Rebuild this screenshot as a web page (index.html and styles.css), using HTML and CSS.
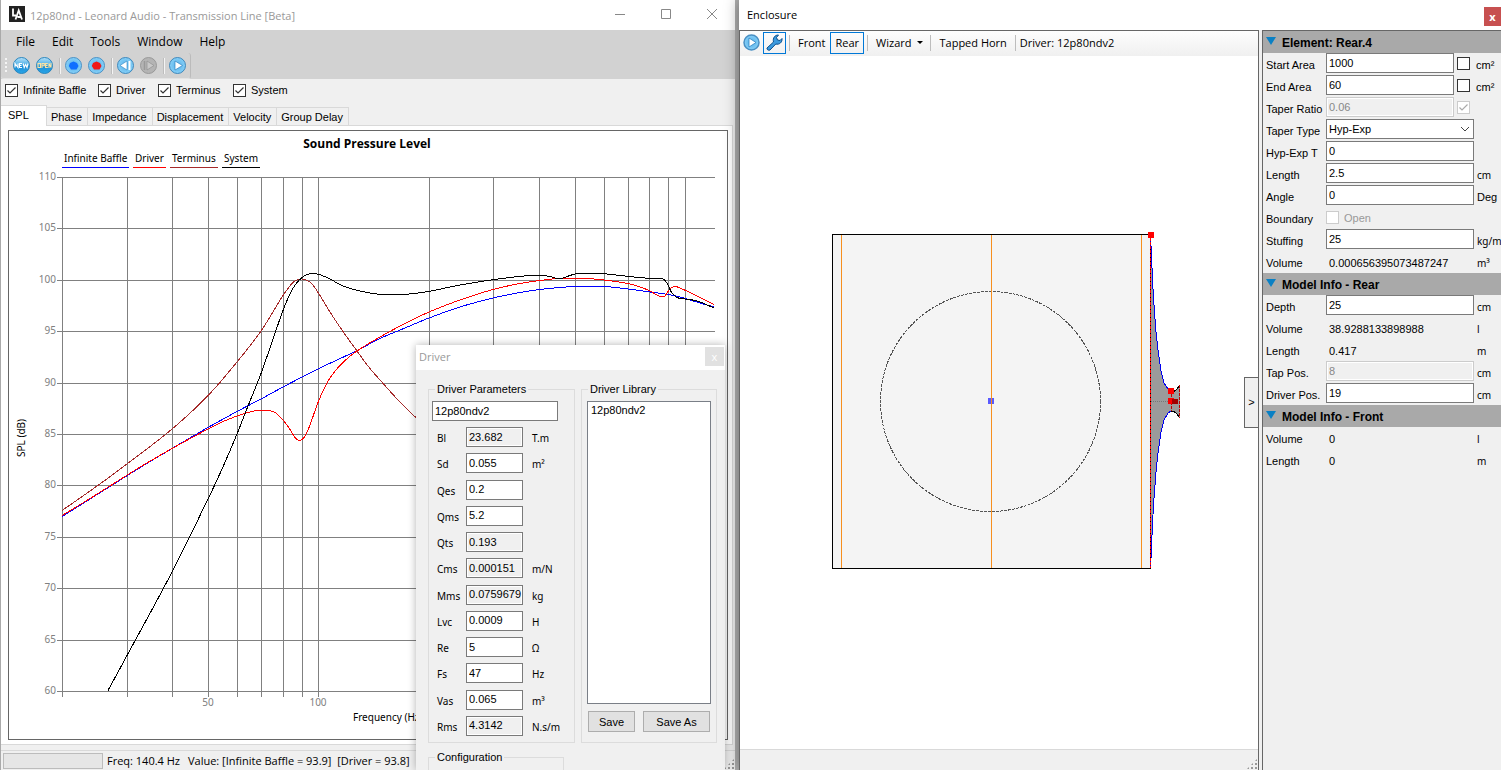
FILE: index.html
```html
<!DOCTYPE html>
<html lang="en">
<head>
    <meta charset="UTF-8">
    <meta name="viewport" content="width=device-width, initial-scale=1.0">
    <title>12p80nd - Leonard Audio - Transmission Line [Beta]</title>
    <link rel="stylesheet" href="styles.css">
</head>
<body>
    <!-- Shared gradients for the round toolbar icons -->
    <svg class="defs" width="0" height="0" aria-hidden="true">
        <defs>
            <linearGradient id="gloss" x1="0" y1="0" x2="0" y2="1">
                <stop offset="0" stop-color="#b9e2f8"/>
                <stop offset="0.45" stop-color="#4fb0e6"/>
                <stop offset="0.55" stop-color="#1c8fd6"/>
                <stop offset="1" stop-color="#2aa5e8"/>
            </linearGradient>
            <radialGradient id="ring">
                <stop offset="0" stop-color="#55aee8"/>
                <stop offset="1" stop-color="#86d0f7"/>
            </radialGradient>
        </defs>
    </svg>

    <!-- Main window -->
    <main class="main-window">
        <header class="titlebar">
            <svg class="logo" width="16" height="16" viewBox="0 0 16 16">
                <rect width="16" height="16" fill="#222"/>
                <path d="M4 2.500V9.500H7M6.500 13.500L9.700 4.500L13 13.500M8.500 11H12" fill="none" stroke="#fff" stroke-width="1.800"/>
            </svg>
            <span class="title">12p80nd - Leonard Audio - Transmission Line [Beta]</span>
            <div class="window-buttons">
                <button type="button" aria-label="Minimize"><svg width="12" height="12" viewBox="0 0 12 12"><path d="M1 5.500H11"/></svg></button>
                <button type="button" aria-label="Maximize"><svg width="12" height="12" viewBox="0 0 12 12"><path d="M1.500 0.500H10.500V9.500H1.500Z"/></svg></button>
                <button type="button" aria-label="Close"><svg width="12" height="12" viewBox="0 0 12 12"><path d="M1 0L11 10M11 0L1 10"/></svg></button>
            </div>
        </header>

        <nav class="menu">
            <button type="button">File</button>
            <button type="button">Edit</button>
            <button type="button">Tools</button>
            <button type="button">Window</button>
            <button type="button">Help</button>
        </nav>

        <div class="toolbar-row">
            <div class="toolbar">
                <span class="grip"></span>
                <button type="button" aria-label="New">
                    <svg width="17" height="17" viewBox="0 0 17 17"><circle cx="8.500" cy="8.500" r="8" fill="url(#gloss)" stroke="#2b86bd"/><path d="M2 10.500V6.500L5 10.500V6.500M9 6.500H6.500V10.500H9M6.500 8.500H8.500M10.200 6.500L11.200 10.500L12.600 7.500L14 10.500L15 6.500" fill="none" stroke="#fff" stroke-width="1.100"/></svg>
                </button>
                <button type="button" aria-label="Open">
                    <svg width="17" height="17" viewBox="0 0 17 17"><circle cx="8.500" cy="8.500" r="8" fill="url(#gloss)" stroke="#2b86bd"/><path d="M2 6.500H4.500V10.500H2ZM6 11V6.500H8.300V8.800H6M11.800 6.500H9.600V10.500H11.800M9.600 8.500H11.500M13 11V6.500L15 10.500V6" fill="none" stroke="#ffe2a0" stroke-width="1.100"/></svg>
                </button>
                <span class="sep"></span>
                <button type="button" aria-label="Store blue trace">
                    <svg width="17" height="17" viewBox="0 0 17 17"><circle cx="8.500" cy="8.500" r="8" fill="url(#ring)" stroke="#4a90c4"/><path d="M8.500 4.500L12 6L13.500 9L11.500 12.500H6L3.800 9L5 6Z" fill="#0f6fff"/></svg>
                </button>
                <button type="button" aria-label="Store red trace">
                    <svg width="17" height="17" viewBox="0 0 17 17"><circle cx="8.500" cy="8.500" r="8" fill="url(#ring)" stroke="#4a90c4"/><path d="M8.500 4.500L12 6L13.500 9L11.500 12.500H6L3.800 9L5 6Z" fill="#f01818"/></svg>
                </button>
                <span class="sep"></span>
                <button type="button" aria-label="Step back">
                    <svg width="17" height="17" viewBox="0 0 17 17"><circle cx="8.500" cy="8.500" r="8" fill="url(#ring)" stroke="#3f87bb"/><path d="M10 4V13L3 8.500Z" fill="#fff" stroke="#2f84c2" stroke-width="0.600"/><path d="M12.500 4V13" stroke="#fff" stroke-width="2"/></svg>
                </button>
                <button type="button" aria-label="Step forward" disabled>
                    <svg width="17" height="17" viewBox="0 0 17 17"><circle cx="8.500" cy="8.500" r="8" fill="#b4b4b4" stroke="#999"/><path d="M7 4V13L14 8.500Z" fill="#c9c9c9" stroke="#909090" stroke-width="0.700"/><path d="M4.500 4V13" stroke="#999" stroke-width="1.500"/></svg>
                </button>
                <span class="sep"></span>
                <button type="button" aria-label="Run">
                    <svg width="17" height="17" viewBox="0 0 17 17"><circle cx="8.500" cy="8.500" r="8" fill="url(#ring)" stroke="#3f87bb"/><path d="M6 4V13L13.500 8.500Z" fill="#fff" stroke="#2f84c2" stroke-width="0.700"/></svg>
                </button>
            </div>
        </div>

        <form class="traces">
            <label class="tr-infinite"><input type="checkbox" class="check" checked> Infinite Baffle</label>
            <label class="tr-driver"><input type="checkbox" class="check" checked> Driver</label>
            <label class="tr-terminus"><input type="checkbox" class="check" checked> Terminus</label>
            <label class="tr-system"><input type="checkbox" class="check" checked> System</label>
        </form>

        <div class="tabs">
            <button type="button" class="tab active">SPL</button>
            <button type="button" class="tab">Phase</button>
            <button type="button" class="tab">Impedance</button>
            <button type="button" class="tab">Displacement</button>
            <button type="button" class="tab">Velocity</button>
            <button type="button" class="tab">Group Delay</button>
        </div>

        <section class="tab-page">
            <div class="chart">
                <svg viewBox="9 131 718 608" preserveAspectRatio="xMinYMin meet">
                    <text class="chart-title" x="367" y="148" text-anchor="middle">Sound Pressure Level</text>

                    <g class="legend">
                        <text x="64" y="162">Infinite Baffle</text>
                        <text x="135" y="162">Driver</text>
                        <text x="172" y="162">Terminus</text>
                        <text x="224" y="162">System</text>
                        <path class="infinite" d="M62 167.500H129"/>
                        <path class="driver" d="M133 167.500H166"/>
                        <path class="terminus" d="M170 167.500H218"/>
                        <path class="system" d="M222 167.500H260"/>
                    </g>

                    <path class="grid" d="M57 177.500H715M57 228.500H715M57 280.500H715M57 331.500H715M57 383.500H715M57 434.500H715M57 485.500H715M57 537.500H715M57 588.500H715M57 640.500H715M57 691.500H715"/>
                    <path class="grid" d="M62.500 177V697M127.500 177V697M172.500 177V697M208.500 177V697M237.500 177V697M261.500 177V697M283.500 177V697M302.500 177V697M318.500 177V697M429.500 177V697M493.500 177V697M539.500 177V697M575.500 177V697M604.500 177V697M628.500 177V697M649.500 177V697M668.500 177V697M685.500 177V697"/>

                    <g class="axis" text-anchor="end">
                        <text x="56" y="180">110</text>
                        <text x="56" y="231">105</text>
                        <text x="56" y="283">100</text>
                        <text x="56" y="334">95</text>
                        <text x="56" y="386">90</text>
                        <text x="56" y="437">85</text>
                        <text x="56" y="488">80</text>
                        <text x="56" y="540">75</text>
                        <text x="56" y="591">70</text>
                        <text x="56" y="643">65</text>
                        <text x="56" y="694">60</text>
                    </g>
                    <g class="axis" text-anchor="middle">
                        <text x="208" y="706">50</text>
                        <text x="318" y="706">100</text>
                    </g>
                    <text class="axis-title" x="353" y="721">Frequency (Hz)</text>
                    <text class="axis-title" transform="translate(25 457) rotate(-90)">SPL (dB)</text>

                    <path id="infiniteCurve" class="infinite"/>
                    <path id="driverCurve" class="driver"/>
                    <path id="terminusCurve" class="terminus"/>
                    <path id="systemCurve" class="system"/>
                </svg>
            </div>
        </section>

        <footer class="statusbar">
            <div class="progress"></div>
            <span>Freq: 140.4 Hz</span>
            <span>Value: [Infinite Baffle = 93.9]&nbsp; [Driver = 93.8]</span>
            <span class="size-grip"></span>
        </footer>

        <!-- Driver dialog, floats over the chart -->
        <section class="dialog">
            <header class="dialog-title">
                <span>Driver</span>
                <button type="button" class="close-box" aria-label="Close">x</button>
            </header>
            <form class="dialog-body">
                <fieldset class="params">
                    <legend>Driver Parameters</legend>
                    <input type="text" class="driver-name" aria-label="Driver name" value="12p80ndv2">
                    <div class="param-grid">
                        <label for="bl">Bl</label><input type="text" id="bl" value="23.682" readonly><span>T.m</span>
                        <label for="sd">Sd</label><input type="text" id="sd" value="0.055"><span>m²</span>
                        <label for="qes">Qes</label><input type="text" id="qes" value="0.2"><span></span>
                        <label for="qms">Qms</label><input type="text" id="qms" value="5.2"><span></span>
                        <label for="qts">Qts</label><input type="text" id="qts" value="0.193" readonly><span></span>
                        <label for="cms">Cms</label><input type="text" id="cms" value="0.000151" readonly><span>m/N</span>
                        <label for="mms">Mms</label><input type="text" id="mms" value="0.0759679" readonly><span>kg</span>
                        <label for="lvc">Lvc</label><input type="text" id="lvc" value="0.0009"><span>H</span>
                        <label for="re">Re</label><input type="text" id="re" value="5"><span>Ω</span>
                        <label for="fs">Fs</label><input type="text" id="fs" value="47"><span>Hz</span>
                        <label for="vas">Vas</label><input type="text" id="vas" value="0.065"><span>m³</span>
                        <label for="rms">Rms</label><input type="text" id="rms" value="4.3142" readonly><span>N.s/m</span>
                    </div>
                </fieldset>
                <fieldset class="library">
                    <legend>Driver Library</legend>
                    <select size="18" aria-label="Driver Library">
                        <option>12p80ndv2</option>
                    </select>
                    <div class="library-buttons">
                        <button type="button">Save</button>
                        <button type="button">Save As</button>
                    </div>
                </fieldset>
                <fieldset class="configuration">
                    <legend>Configuration</legend>
                </fieldset>
            </form>
        </section>
    </main>

    <!-- Enclosure window -->
    <section class="enclosure">
        <header class="enclosure-title">
            <span>Enclosure</span>
            <button type="button" class="close-red" aria-label="Close">x</button>
        </header>
        <div class="enclosure-body">
            <div class="editor">
                <div class="editor-bar">
                    <button type="button" class="icon" aria-label="Run">
                        <svg width="17" height="17" viewBox="0 0 17 17"><circle cx="8.500" cy="8.500" r="7.500" fill="url(#ring)" stroke="#4a90c4" stroke-width="1.500"/><path d="M6 4V13L13 8.500Z" fill="#fff" stroke="#2f84c2" stroke-width="0.800"/></svg>
                    </button>
                    <button type="button" class="icon pressed" aria-label="Edit">
                        <svg width="17" height="17" viewBox="0 0 17 17"><path d="M1 14L7.500 8C6.500 4 9 0.800 12.500 1L10.500 3.500L11.500 6L14 6.500L16 4.500C16.500 8.500 13 11 9.800 10L4 16C2.500 16.800 0.500 15.500 1 14Z" fill="#3b9ade" stroke="#0b4f8c"/></svg>
                    </button>
                    <span class="bar-sep"></span>
                    <button type="button">Front</button>
                    <button type="button" class="pressed">Rear</button>
                    <span class="bar-sep"></span>
                    <button type="button">Wizard <span class="arrow"></span></button>
                    <span class="bar-sep"></span>
                    <button type="button">Tapped Horn</button>
                    <span class="bar-sep"></span>
                    <span class="bar-text">Driver: 12p80ndv2</span>
                </div>
                <div class="canvas">
                    <svg viewBox="740 57 518 691">
                        <rect x="832.500" y="234.500" width="318" height="334" fill="#f4f4f4" stroke="#000"/>
                        <circle cx="990.500" cy="401.500" r="110" fill="none" stroke="#555" stroke-dasharray="3 1"/>
                        <rect x="988" y="398" width="6" height="6" fill="#5a5aff"/>
                        <path d="M841.500 235V568M991.500 235V568M1141.500 235V568" stroke="#f78f1e"/>
                        <!-- horn section -->
                        <path d="M1150.500 236L1151.500 255L1152.500 280L1154 305L1156 332L1158 350L1161 371L1164 383L1168 389L1171 391H1174L1177 389L1180 385V418L1177 414L1174 411H1171L1168 413L1164 420L1161 432L1158 453L1156 472L1154 498L1152.500 523L1151.500 548L1150.500 568Z" fill="#9b9b9b"/>
                        <path d="M1150.500 236L1151.500 255L1152.500 280L1154 305L1156 332L1158 350L1161 371L1164 383L1168 389L1171 391M1171 411L1168 413L1164 420L1161 432L1158 453L1156 472L1154 498L1152.500 523L1151.500 548L1150.500 568" fill="none" stroke="#0000f0"/>
                        <path d="M1171 391.500H1174L1177 389L1180 385M1171 411.500H1174L1177 414L1180 418" fill="none" stroke="#000"/>
                        <path d="M1151 401.500H1168" stroke="#777" stroke-dasharray="1 1"/>
                        <path d="M1150.500 238V568" stroke="#f00" stroke-dasharray="3 1"/>
                        <path d="M1171.500 394V411M1179.500 385V418" stroke="#c00000" stroke-dasharray="3 1"/>
                        <path d="M1148 232H1154V238H1148ZM1168 388H1174V394H1168ZM1168 398H1174V404H1168Z" fill="#f00"/>
                        <rect x="1172" y="399" width="6" height="5" fill="#a00000"/>
                    </svg>
                    <button type="button" class="collapse">&gt;</button>
                </div>
                <div class="editor-foot"><span class="size-grip"></span></div>
            </div>

            <form class="properties">
                <h2>Element: Rear.4</h2>
                <div class="row"><label for="startArea">Start Area</label><input type="text" id="startArea" class="short" value="1000"><input type="checkbox" class="check" aria-label="Lock start area"><span class="unit big">cm²</span></div>
                <div class="row"><label for="endArea">End Area</label><input type="text" id="endArea" class="short" value="60"><input type="checkbox" class="check" aria-label="Lock end area"><span class="unit big">cm²</span></div>
                <div class="row"><label for="taperRatio">Taper Ratio</label><input type="text" id="taperRatio" class="short" value="0.06" disabled><input type="checkbox" class="check" aria-label="Lock taper ratio" checked disabled></div>
                <div class="row"><label for="taperType">Taper Type</label><select id="taperType"><option>Hyp-Exp</option></select></div>
                <div class="row"><label for="hypExpT">Hyp-Exp T</label><input type="text" id="hypExpT" value="0"></div>
                <div class="row"><label for="length">Length</label><input type="text" id="length" value="2.5"><span class="unit">cm</span></div>
                <div class="row"><label for="angle">Angle</label><input type="text" id="angle" value="0"><span class="unit big">Deg</span></div>
                <div class="row"><label for="boundary">Boundary</label><input type="checkbox" id="boundary" class="check" disabled><span class="muted">Open</span></div>
                <div class="row"><label for="stuffing">Stuffing</label><input type="text" id="stuffing" value="25"><span class="unit">kg/m³</span></div>
                <div class="row"><span class="name">Volume</span><output>0.000656395073487247</output><span class="unit">m³</span></div>

                <h2>Model Info - Rear</h2>
                <div class="row"><label for="depth">Depth</label><input type="text" id="depth" value="25"><span class="unit">cm</span></div>
                <div class="row"><span class="name">Volume</span><output>38.9288133898988</output><span class="unit">l</span></div>
                <div class="row"><span class="name">Length</span><output>0.417</output><span class="unit">m</span></div>
                <div class="row"><label for="tapPos">Tap Pos.</label><input type="text" id="tapPos" value="8" disabled><span class="unit">cm</span></div>
                <div class="row"><label for="driverPos">Driver Pos.</label><input type="text" id="driverPos" value="19"><span class="unit">cm</span></div>

                <h2>Model Info - Front</h2>
                <div class="row"><span class="name">Volume</span><output>0</output><span class="unit">l</span></div>
                <div class="row"><span class="name">Length</span><output>0</output><span class="unit">m</span></div>
            </form>
        </div>
    </section>

    <script src="chart.js"></script>
</body>
</html>
```
FILE: styles.css
```css
* {
    box-sizing: border-box;
}

body {
    margin: 0;
    height: 100vh;
    display: flex;
    gap: 4px;
    overflow: hidden;
    background-color: #b0b0b0;
    font-family: "Liberation Sans", Arial, sans-serif;
    font-size: 11px;
    color: #000;
}

button,
input,
select {
    font: inherit;
    color: inherit;
    margin: 0;
}

button {
    padding: 0;
    border: none;
    background: none;
}

.defs {
    position: absolute;
}

/* Main window */
.main-window {
    position: relative;
    flex: 1 1 735px;
    min-width: 0;
    display: flex;
    flex-direction: column;
    border-left: 1px solid #aaa;
    background-color: #f0f0f0;
}

.titlebar {
    display: flex;
    align-items: center;
    height: 30px;
    padding-left: 8px;
    background-color: #fff;
    font-family: "Open Sans", "Noto Sans", sans-serif;
    font-size: 11px;
    color: #999;
}

.logo {
    margin-bottom: 2px;
}

.title {
    margin-left: 5px;
}

.window-buttons {
    display: flex;
    margin-left: auto;
}

.window-buttons button {
    display: flex;
    align-items: center;
    justify-content: center;
    width: 46px;
    height: 28px;
}

.window-buttons svg {
    fill: none;
    stroke: #888;
}

.menu {
    display: flex;
    align-items: center;
    gap: 17px;
    height: 23px;
    padding-left: 15px;
    background-color: #d2d2d2;
    font-family: "Open Sans", "Noto Sans", sans-serif;
    font-size: 12px;
}

.toolbar-row {
    height: 26px;
    background-color: #d2d2d2;
}

.toolbar {
    display: flex;
    align-items: center;
    gap: 6px;
    width: 190px;
    height: 26px;
    padding-left: 4px;
    border-right: 1px solid #bbb;
    border-bottom: 1px solid #e4e4e4;
    border-radius: 3px;
}

.toolbar button {
    display: flex;
}

.grip {
    width: 2px;
    height: 16px;
    background: repeating-linear-gradient(#f4f4f4 0 2px, transparent 2px 4px);
}

.sep {
    width: 2px;
    height: 16px;
    margin: 0 -2px 0 0;
    background-color: #f4f4f4;
    border-left: 1px solid #bdbdbd;
}

.check {
    appearance: none;
    flex: none;
    width: 13px;
    height: 13px;
    border: 1px solid #333;
    background-color: #fff;
}

.check:checked {
    background-image: url("data:image/svg+xml,%3Csvg xmlns='http://www.w3.org/2000/svg' viewBox='0 0 11 11'%3E%3Cpath d='M1.500 5.500L4 8L9.500 2.500' fill='none' stroke='%23333' stroke-width='1.200'/%3E%3C/svg%3E");
}

.check:disabled {
    border-color: #ccc;
}

.check:disabled:checked {
    background-image: url("data:image/svg+xml,%3Csvg xmlns='http://www.w3.org/2000/svg' viewBox='0 0 11 11'%3E%3Cpath d='M1.500 5.500L4 8L9.500 2.500' fill='none' stroke='%23aaa' stroke-width='1.200'/%3E%3C/svg%3E");
}

.traces {
    display: flex;
    height: 26px;
    padding: 4px;
}

.traces label {
    display: flex;
    align-items: center;
    gap: 5px;
    height: 14px;
    white-space: nowrap;
}

.tr-infinite {
    width: 93px;
}

.tr-driver {
    width: 60px;
}

.tr-terminus {
    width: 75px;
}

.tabs {
    display: flex;
    align-items: flex-end;
    height: 20px;
}

.tab {
    height: 18px;
    padding: 0 5px 0 4px;
    border: 1px solid #d9d9d9;
    border-bottom: none;
    border-left: none;
    white-space: nowrap;
}

.tab.active {
    width: 46px;
    height: 21px;
    margin-bottom: -1px;
    padding-bottom: 2px;
    padding-left: 7px;
    background-color: #fff;
    text-align: left;
    z-index: 1;
}

.tab-page {
    flex: 1;
    min-height: 0;
    margin-right: 2px;
    padding: 4px;
    padding-left: 7px;
    background-color: #fff;
    border: 1px solid #d9d9d9;
    border-left: none;
}

.chart {
    height: 100%;
    border: 1px solid #666;
    overflow: hidden;
}

.chart svg {
    display: block;
    width: 100%;
    height: 100%;
}

.chart text {
    font-family: "Noto Sans", "Open Sans", sans-serif;
    font-size: 10px;
}

.chart .chart-title {
    font-family: "Open Sans", "Noto Sans", sans-serif;
    font-size: 12px;
    font-weight: bold;
}

.chart .axis text {
    fill: #808080;
}

.chart path {
    fill: none;
    shape-rendering: crispEdges;
}

.chart .grid {
    stroke: #808080;
}

.chart .infinite {
    stroke: #00f;
}

.chart .driver {
    stroke: #f00;
}

.chart .terminus {
    stroke: #a52a2a;
}

.chart .system {
    stroke: #000;
}

.statusbar {
    display: flex;
    align-items: center;
    gap: 8px;
    height: 20px;
    margin-top: 5px;
    padding-left: 2px;
    border-top: 1px solid #d9d9d9;
    font-family: "Open Sans", "Noto Sans", sans-serif;
    font-size: 11px;
    white-space: nowrap;
}

.progress {
    width: 100px;
    height: 16px;
    margin-right: -4px;
    border: 1px solid #bcbcbc;
    background-color: #e6e6e6;
}

.size-grip {
    flex: none;
    width: 12px;
    height: 12px;
    margin: auto 0 0 auto;
    background: radial-gradient(#999 1px, transparent 1px) 0 0 / 4px 4px;
    clip-path: polygon(100% 0, 100% 100%, 0 100%);
}

/* Driver dialog */
.dialog {
    position: absolute;
    top: 345px;
    right: 10px;
    bottom: 0;
    width: 309px;
    display: flex;
    flex-direction: column;
    background-color: #f0f0f0;
    box-shadow: 0 0 8px rgba(0, 0, 0, 0.3);
    overflow: hidden;
}

.dialog-title {
    display: flex;
    flex: none;
    justify-content: space-between;
    height: 25px;
    padding: 2px 1px 0 3px;
    background-color: #fff;
    font-family: "Open Sans", "Noto Sans", sans-serif;
    font-size: 11px;
    line-height: 20px;
    color: #999;
}

.close-box {
    width: 19px;
    height: 19px;
    background-color: #e1e1e1;
    color: #fff;
    line-height: 16px;
}

.dialog-body {
    display: grid;
    grid-template-columns: 147px 136px;
    grid-template-rows: 361px 40px;
    gap: 7px 6px;
    padding: 12px 8px 0 12px;
}

fieldset {
    min-width: 0;
    margin: 0;
    padding: 0;
    border: 1px solid #dcdcdc;
}

legend {
    margin-left: 6px;
    padding: 0 2px;
    line-height: 14px;
}

.dialog input {
    width: 57px;
    height: 20px;
    padding: 0 0 1px 2px;
    border: 1px solid #7a7a7a;
    background-color: #fff;
}

.dialog input[readonly] {
    background-color: #f0f0f0;
    box-shadow: inset 0 0 0 1px #fff;
}

.dialog .driver-name {
    display: block;
    width: 126px;
    margin: 5px 0 6px 3px;
}

.param-grid {
    display: grid;
    grid-template-columns: 29px 57px 40px;
    grid-auto-rows: 20px;
    align-content: space-between;
    align-items: center;
    height: 309px;
    padding-left: 8px;
}

.param-grid label,
.param-grid span {
    padding-top: 2px;
    font-family: "Noto Sans", "Open Sans", sans-serif;
    font-size: 10px;
    line-height: 16px;
}

.param-grid span {
    padding-left: 9px;
}

.library select {
    display: block;
    width: 124px;
    height: 303px;
    margin: 5px 5px 0;
    padding: 2px;
    border: 1px solid #7a7f87;
    border-radius: 0;
    background-color: #fff;
    overflow: hidden;
}

.library option {
    padding: 0 1px;
}

.library-buttons {
    display: flex;
    gap: 8px;
    margin: 7px 6px;
}

.library-buttons button {
    width: 47px;
    height: 21px;
    border: 1px solid #adadad;
    background-color: #e1e1e1;
}

.library-buttons button + button {
    width: 67px;
}

.configuration {
    width: 136px;
}

/* Enclosure window */
.enclosure {
    position: relative;
    flex: 1 1 762px;
    min-width: 0;
    display: flex;
    flex-direction: column;
    background-color: #fff;
    box-shadow: 0 0 14px rgba(0, 0, 0, 0.4);
}

.enclosure-title {
    display: flex;
    flex: none;
    justify-content: space-between;
    height: 30px;
    padding-left: 8px;
    font-family: "Open Sans", "Noto Sans", sans-serif;
    font-size: 11px;
    line-height: 30px;
}

.close-red {
    width: 17px;
    height: 19px;
    margin-top: 7px;
    background-color: #c75050;
    color: #fff;
    font-weight: bold;
    line-height: 18px;
}

.enclosure-body {
    display: flex;
    flex: 1;
    min-height: 0;
    gap: 3px;
    background-color: #f0f0f0;
}

.editor {
    flex: 1;
    min-width: 0;
    display: flex;
    flex-direction: column;
    border: 1px solid #666;
    border-bottom: none;
}

.editor-bar {
    display: flex;
    align-items: center;
    height: 25px;
    padding: 0 0 2px 3px;
    background: linear-gradient(#fdfdfd, #f0f0f0);
    font-family: "Open Sans", "Noto Sans", sans-serif;
    font-size: 11px;
    white-space: nowrap;
}

.editor-bar button {
    display: flex;
    align-items: center;
    height: 22px;
    padding: 0 4px;
    border: 1px solid transparent;
}

.editor-bar .icon {
    padding: 0 2px;
}

.editor-bar .icon:first-child {
    padding: 0;
    border: none;
    margin-right: 3px;
}

.editor-bar .pressed {
    border-color: #0078d7;
}

.bar-sep {
    width: 1px;
    height: 16px;
    margin: 0 3px;
    background-color: #bdbdbd;
}

.bar-text {
    padding-left: 1px;
}

.arrow {
    margin: 0 -1px 0 6px;
    border: 3px solid transparent;
    border-top-color: #000;
    border-bottom: none;
}

.canvas {
    position: relative;
    flex: 1;
    min-height: 0;
    background-color: #fff;
}

.canvas svg {
    display: block;
    width: 100%;
    height: 100%;
    shape-rendering: crispEdges;
}

.collapse {
    position: absolute;
    right: 0;
    top: 50%;
    width: 14px;
    height: 51px;
    margin-top: -26px;
    border: 1px solid #666;
    border-right: none;
    background-color: #f0f0f0;
}

.editor-foot {
    display: flex;
    height: 21px;
    background-color: #f0f0f0;
    border-top: 1px solid #d9d9d9;
}

/* Property panel */
.properties {
    flex: none;
    width: 239px;
    border-left: 1px solid #666;
    border-top: 1px solid #666;
    overflow: hidden;
}

.properties h2 {
    display: flex;
    align-items: center;
    height: 22px;
    margin: 0;
    padding: 2px 0 0 3px;
    background-color: #a9a9a9;
    font-size: 12px;
}

.properties h2::before {
    content: "";
    margin: -4px 6px 0 0;
    border: 5px solid transparent;
    border-top: 8px solid #0a80c4;
    border-bottom: none;
}

.row {
    display: flex;
    height: 22px;
    padding-left: 3px;
    white-space: nowrap;
}

.row label,
.row .name {
    flex: none;
    width: 60px;
    line-height: 24px;
}

.row input[type="text"],
.row select {
    flex: none;
    width: 148px;
    height: 20px;
    padding: 0 0 1px 2px;
    border: 1px solid #7a7a7a;
    border-radius: 0;
    background-color: #fff;
}

.row input.short {
    width: 128px;
    margin-right: 3px;
}

.row input[type="text"]:disabled {
    border-color: #ccc;
    background-color: #f0f0f0;
    box-shadow: inset 0 0 0 1px #fff;
    color: #888;
}

.row select {
    appearance: none;
    background: #fff url("data:image/svg+xml,%3Csvg xmlns='http://www.w3.org/2000/svg' viewBox='0 0 10 6'%3E%3Cpath d='M1 1L5 5L9 1' fill='none' stroke='%23444'/%3E%3C/svg%3E") no-repeat right 3px center / 10px 6px;
}

.row .check {
    margin-top: 4px;
}

.row output {
    width: 148px;
    padding-left: 3px;
    line-height: 24px;
}

.row .unit {
    margin-left: 3px;
    font-family: "Noto Sans", "Open Sans", sans-serif;
    font-size: 10px;
    line-height: 24px;
}

.row .check + .unit {
    margin-left: 6px;
}

.row .unit.big {
    font-family: inherit;
    font-size: 11px;
}

.muted {
    margin-left: 5px;
    line-height: 22px;
    color: #999;
}
```
FILE: chart.js
```js
// Response curves, as x,y points of the plot area
const curves = {
    infiniteCurve: [[62,516.5],[90,499],[137,469.5],[172,448.5],[208,427.5],[237,411.5],[261,399],[283,387],[318,369],[356,351],[380,338.5],[405,328],[429,318],[460,307],[493,298],[520,292.5],[540,289.5],[560,287.5],[575,286.5],[604,286.5],[628,289],[650,292],[668,294.5],[680,297],[700,303],[714,307]],
    driverCurve: [[62,515.5],[90,498.5],[137,469],[172,448.5],[208,429],[222,422],[237,416],[248,412.5],[257,410.5],[268,410.5],[275,412.5],[283,420],[291,431],[295,437.5],[300,440.5],[304,437.5],[309,427.5],[319,400],[330,378],[343,362.5],[357,351],[380,337],[405,323.5],[429,312],[460,300],[493,289.5],[520,283.5],[540,280.5],[558,278.5],[585,278.5],[604,280],[628,283.5],[640,287],[650,291],[657,295],[662,297],[665,296],[669,290],[674,286.5],[680,288],[700,297.5],[714,304.5]],
    terminusCurve: [[62,510.5],[90,491],[119,470],[172,429],[208,395.5],[237,362],[261,331],[272,313.5],[283,295.5],[292,283.5],[297,280],[302,279],[308,281],[313,285],[319,294],[330,312],[343,331.5],[357,351],[368,366],[380,380],[400,402],[430,431]],
    systemCurve: [[108,690.5],[127,655.5],[172,572],[208,499],[222,469],[237,434],[248,406],[261,373.5],[272,342],[283,310.5],[291,292],[297,282.5],[301,278.5],[306,275],[312,273.5],[319,274.5],[329,278.5],[343,286],[360,291],[380,294.3],[405,294.3],[429,291.3],[460,285],[493,279.7],[510,277.5],[530,275.5],[543,275.5],[552,277],[557,278.5],[563,278],[570,275.5],[578,273.5],[600,273.5],[625,276],[645,278],[662,278.5],[665,280.5],[668,285],[671,291.5],[677,297.5],[690,299.5],[700,302],[714,308]]
};

// Slope of the line through two points
function slope(a, b) {
    return (b[1] - a[1]) / (b[0] - a[0]);
}

// Cubic interpolation between the points, one vertex every 2 units
function smoothPath(points) {
    let d = `M${points[0][0]} ${points[0][1]}`;
    for (let i = 0; i < points.length - 1; i++) {
        const from = points[i];
        const to = points[i + 1];
        const step = to[0] - from[0];
        const slopeFrom = slope(points[i - 1] || from, to);
        const slopeTo = slope(from, points[i + 2] || to);

        for (let x = Math.min(2, step); x <= step; x = x < step ? Math.min(x + 2, step) : step + 1) {
            const t = x / step;
            const y = (2 * t ** 3 - 3 * t ** 2 + 1) * from[1]
                + (t ** 3 - 2 * t ** 2 + t) * step * slopeFrom
                + (3 * t ** 2 - 2 * t ** 3) * to[1]
                + (t ** 3 - t ** 2) * step * slopeTo;
            d += `L${from[0] + x} ${y.toFixed(2)}`;
        }
    }
    return d;
}

for (const id in curves) {
    document.getElementById(id).setAttribute("d", smoothPath(curves[id]));
}
```
